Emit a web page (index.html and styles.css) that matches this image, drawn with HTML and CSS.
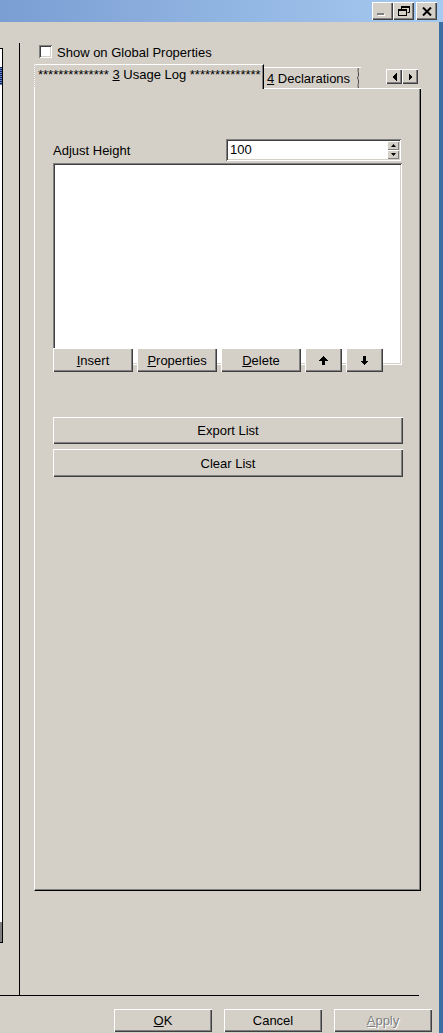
FILE: index.html
```html
<!DOCTYPE html>
<html>
<head>
  <meta charset="utf-8">
  <link rel="stylesheet" href="styles.css">
</head>
<body>
  <div class="window">
    <div class="titlebar">
      <button class="caption-btn">
        <svg width="9" height="4" viewBox="0 0 9 4"><rect x="1" y="1" width="7" height="2" fill="#fff"/><rect x="0" y="0" width="7" height="2" fill="#808080"/></svg>
      </button>
      <button class="caption-btn">
        <svg width="12" height="10" viewBox="0 0 12 10"><path d="M3.5 3V0.5h8v6h-2" fill="none" stroke="#000"/><rect x="3" y="0" width="9" height="2" fill="#000"/><rect x="0.5" y="3.5" width="8" height="6" fill="#d4d0c8" stroke="#000"/><rect x="0" y="3" width="9" height="2" fill="#000"/></svg>
      </button>
      <button class="caption-btn close">
        <svg width="10" height="9" viewBox="0 0 10 9"><path d="M1 0.5L9 8.5M9 0.5L1 8.5" stroke="#000" stroke-width="2"/></svg>
      </button>
    </div>

    <div class="client">
      <div class="workarea">
        <div class="sidebar">
          <div class="tree">
            <div class="tree-focus"></div>
            <div class="tree-scroll"></div>
          </div>
        </div>
        <div class="divider"></div>

        <div class="page">
          <label class="check-row"><span class="checkbox"></span>Show on Global Properties</label>

          <div class="tabstrip">
            <div class="tab-active"><span>**************</span> <u>3</u> Usage Log <span>**************</span></div>
            <div class="tab-rest">
              <div class="tab">
                <span><u>4</u> Declarations</span>
                <svg class="clip-edge" width="5" height="20" viewBox="0 0 5 20"><path d="M2.5 0C1 3 4 6 1.5 10C4 14 1 17 2.5 20" fill="none" stroke="#404040"/></svg>
              </div>
              <div class="tab-scroll">
                <button class="scroll-btn"><svg width="5" height="8" viewBox="0 0 5 8" shape-rendering="crispEdges"><polygon points="4.5,0 4.5,8 0.5,4" fill="#000"/></svg></button>
                <button class="scroll-btn"><svg width="5" height="8" viewBox="0 0 5 8" shape-rendering="crispEdges"><polygon points="0.5,0 0.5,8 4.5,4" fill="#000"/></svg></button>
              </div>
            </div>
          </div>

          <div class="panel">
            <div class="adjust-row">
              <span>Adjust Height</span>
              <div class="spin-field">
                <span class="value">100</span>
                <div class="spin-btns">
                  <span><svg width="5" height="3" viewBox="0 0 5 3"><polygon points="0,3 2.5,0 5,3" fill="#000"/></svg></span>
                  <span><svg width="5" height="3" viewBox="0 0 5 3"><polygon points="0,0 5,0 2.5,3" fill="#000"/></svg></span>
                </div>
              </div>
            </div>

            <div class="listbox"></div>

            <div class="list-buttons">
              <button class="btn wide"><span><u>I</u>nsert</span></button>
              <button class="btn wide"><span><u>P</u>roperties</span></button>
              <button class="btn wide"><span><u>D</u>elete</span></button>
              <button class="btn arrow">
                <svg width="9" height="9" viewBox="0 0 9 9" shape-rendering="crispEdges"><polygon points="4.5,0 9,4.5 6,4.5 6,9 3,9 3,4.5 0,4.5" fill="#000"/></svg>
              </button>
              <button class="btn arrow">
                <svg width="9" height="9" viewBox="0 0 9 9" shape-rendering="crispEdges"><polygon points="4.5,9 9,4.5 6,4.5 6,0 3,0 3,4.5 0,4.5" fill="#000"/></svg>
              </button>
            </div>

            <button class="btn full export">Export List</button>
            <button class="btn full clear">Clear List</button>
          </div>
        </div>
      </div>

      <div class="rule"></div>

      <div class="footer">
        <button class="btn dialog"><span><u>O</u>K</span></button>
        <button class="btn dialog">Cancel</button>
        <button class="btn dialog disabled"><span><u>A</u>pply</span></button>
      </div>
    </div>
  </div>
</body>
</html>
```

FILE: styles.css
```css
body {
  margin: 0;
  font-family: "Liberation Sans", Arial, sans-serif;
  font-size: 13px;
  color: #000000;
  background: #d4d0c8;
}

.window {
  width: 443px;
  height: 1033px;
  display: flex;
  flex-direction: column;
  overflow: hidden;
}

/* title bar */
.titlebar {
  height: 22px;
  flex-shrink: 0;
  box-sizing: border-box;
  padding: 2px 6px 0 0;
  display: flex;
  justify-content: flex-end;
  align-items: flex-start;
  background: linear-gradient(to right, #7b9ed3, #a6caf0);
}

.caption-btn {
  width: 21px;
  height: 18px;
  padding: 0;
  border: none;
  background: #d4d0c8;
  box-shadow: inset 1px 1px #ffffff, inset -1px -1px #404040, inset -2px -2px #808080;
  display: flex;
  align-items: center;
  justify-content: center;
}

.caption-btn:first-child svg {
  margin-top: 7px;
  margin-left: -3px;
}

.caption-btn.close {
  margin-left: 2px;
}

/* client area */
.client {
  flex: 1;
  min-height: 0;
  display: flex;
  flex-direction: column;
  border-right: 4px solid #3a6ea5;
}

.workarea {
  height: 973px;
  flex-shrink: 0;
  display: flex;
}

.sidebar {
  width: 19px;
  flex-shrink: 0;
  padding-top: 26px;
  box-sizing: border-box;
}

.tree {
  width: 3px;
  height: 895px;
  box-sizing: border-box;
  background: #ffffff;
  border: 1px solid #000000;
  border-left: none;
  display: flex;
  flex-direction: column;
}

.tree-focus {
  margin-top: 18px;
  height: 18px;
  background: repeating-linear-gradient(to bottom, #0a246a 0 1px, #6f87c4 1px 2px);
}

.tree-scroll {
  margin-top: auto;
  height: 20px;
  background: #808080;
}

.divider {
  width: 1px;
  flex-shrink: 0;
  margin-top: 21px;
  background: #000000;
}

.page {
  flex: 1;
  min-width: 0;
  padding: 23px 0 0 14px;
}

/* checkbox */
.check-row {
  display: flex;
  align-items: flex-start;
  gap: 5px;
  height: 15px;
  margin-left: 5px;
  line-height: 15px;
}

.checkbox {
  width: 13px;
  height: 13px;
  flex-shrink: 0;
  background: #ffffff;
  box-shadow: inset 1px 1px #808080, inset -1px -1px #ffffff, inset 2px 2px #404040, inset -2px -2px #d4d0c8;
}

/* tabs */
.tabstrip {
  width: 387px;
  height: 25px;
  margin-top: 4px;
  display: flex;
}

.tab-active {
  width: 230px;
  flex-shrink: 0;
  box-sizing: border-box;
  border-top: 1px solid #ffffff;
  border-left: 1px dotted #ffffff;
  border-right: 1px solid #000000;
  border-top-left-radius: 2px;
  box-shadow: inset -1px 0 #808080;
  padding: 2px 0 0 3px;
  line-height: 15px;
  white-space: nowrap;
}

.tab-rest {
  flex: 1;
  display: flex;
  align-items: flex-start;
  border-bottom: 1px solid #ffffff;
}

.tab {
  width: 97px;
  margin-top: 3px;
  height: 21px;
  box-sizing: border-box;
  border-top: 1px solid #ffffff;
  padding: 3px 0 0 3px;
  line-height: 15px;
  display: flex;
  justify-content: space-between;
  white-space: nowrap;
}

.clip-edge {
  flex-shrink: 0;
  margin-top: -3px;
}

.tab-scroll {
  margin: 5px 3px 0 auto;
  display: flex;
}

.scroll-btn {
  width: 16px;
  height: 15px;
  padding: 0;
  border: none;
  background: #d4d0c8;
  box-shadow: inset 1px 1px #ffffff, inset -1px -1px #404040, inset -2px -2px #808080;
  display: flex;
  align-items: center;
  justify-content: center;
}

/* tab page */
.panel {
  width: 387px;
  height: 802px;
  box-sizing: border-box;
  border-left: 1px solid #ffffff;
  border-right: 1px solid #000000;
  border-bottom: 1px solid #000000;
  box-shadow: inset -1px -1px #808080;
  padding: 50px 16px 0 18px;
}

.adjust-row {
  width: 348px;
  display: flex;
  justify-content: space-between;
  align-items: center;
  line-height: 15px;
}

.spin-field {
  width: 175px;
  height: 22px;
  box-sizing: border-box;
  padding: 2px;
  display: flex;
  background: #ffffff;
  box-shadow: inset 1px 1px #808080, inset -1px -1px #ffffff, inset 2px 2px #404040, inset -2px -2px #d4d0c8;
}

.spin-field .value {
  flex: 1;
  padding-left: 2px;
  line-height: 18px;
}

.spin-btns {
  width: 12px;
  display: flex;
  flex-direction: column;
}

.spin-btns span {
  flex: 1;
  display: flex;
  align-items: center;
  justify-content: center;
  background: #d4d0c8;
  box-shadow: inset 1px 1px #ffffff, inset -1px -1px #808080;
}

.listbox {
  width: 349px;
  height: 202px;
  margin-top: 2px;
  background: #ffffff;
  box-shadow: inset 1px 1px #808080, inset -1px -1px #ffffff, inset 2px 2px #404040, inset -2px -2px #d4d0c8;
}

.list-buttons {
  display: flex;
  gap: 4px;
  margin-top: -17px;
}

/* buttons */
.btn {
  height: 24px;
  box-sizing: border-box;
  padding: 0;
  border: none;
  font: inherit;
  color: #000000;
  background: #d4d0c8;
  box-shadow: inset 1px 1px #ffffff, inset -1px -1px #404040, inset -2px -2px #808080;
  display: flex;
  align-items: center;
  justify-content: center;
  line-height: 15px;
}

.btn.wide {
  width: 80px;
}

.btn.arrow {
  width: 37px;
}

.btn.full {
  width: 350px;
  height: 27px;
}

.btn.export {
  margin-top: 45px;
}

.btn.clear {
  margin-top: 5px;
  height: 28px;
}

.rule {
  width: 419px;
  height: 1px;
  flex-shrink: 0;
  background: #000000;
}

.footer {
  display: flex;
  justify-content: flex-end;
  gap: 12px;
  padding: 13px 7px 0 0;
}

.btn.dialog {
  width: 98px;
  height: 23px;
  flex-shrink: 0;
}

.btn.disabled {
  color: #808080;
  text-shadow: 1px 1px #ffffff;
}
```
